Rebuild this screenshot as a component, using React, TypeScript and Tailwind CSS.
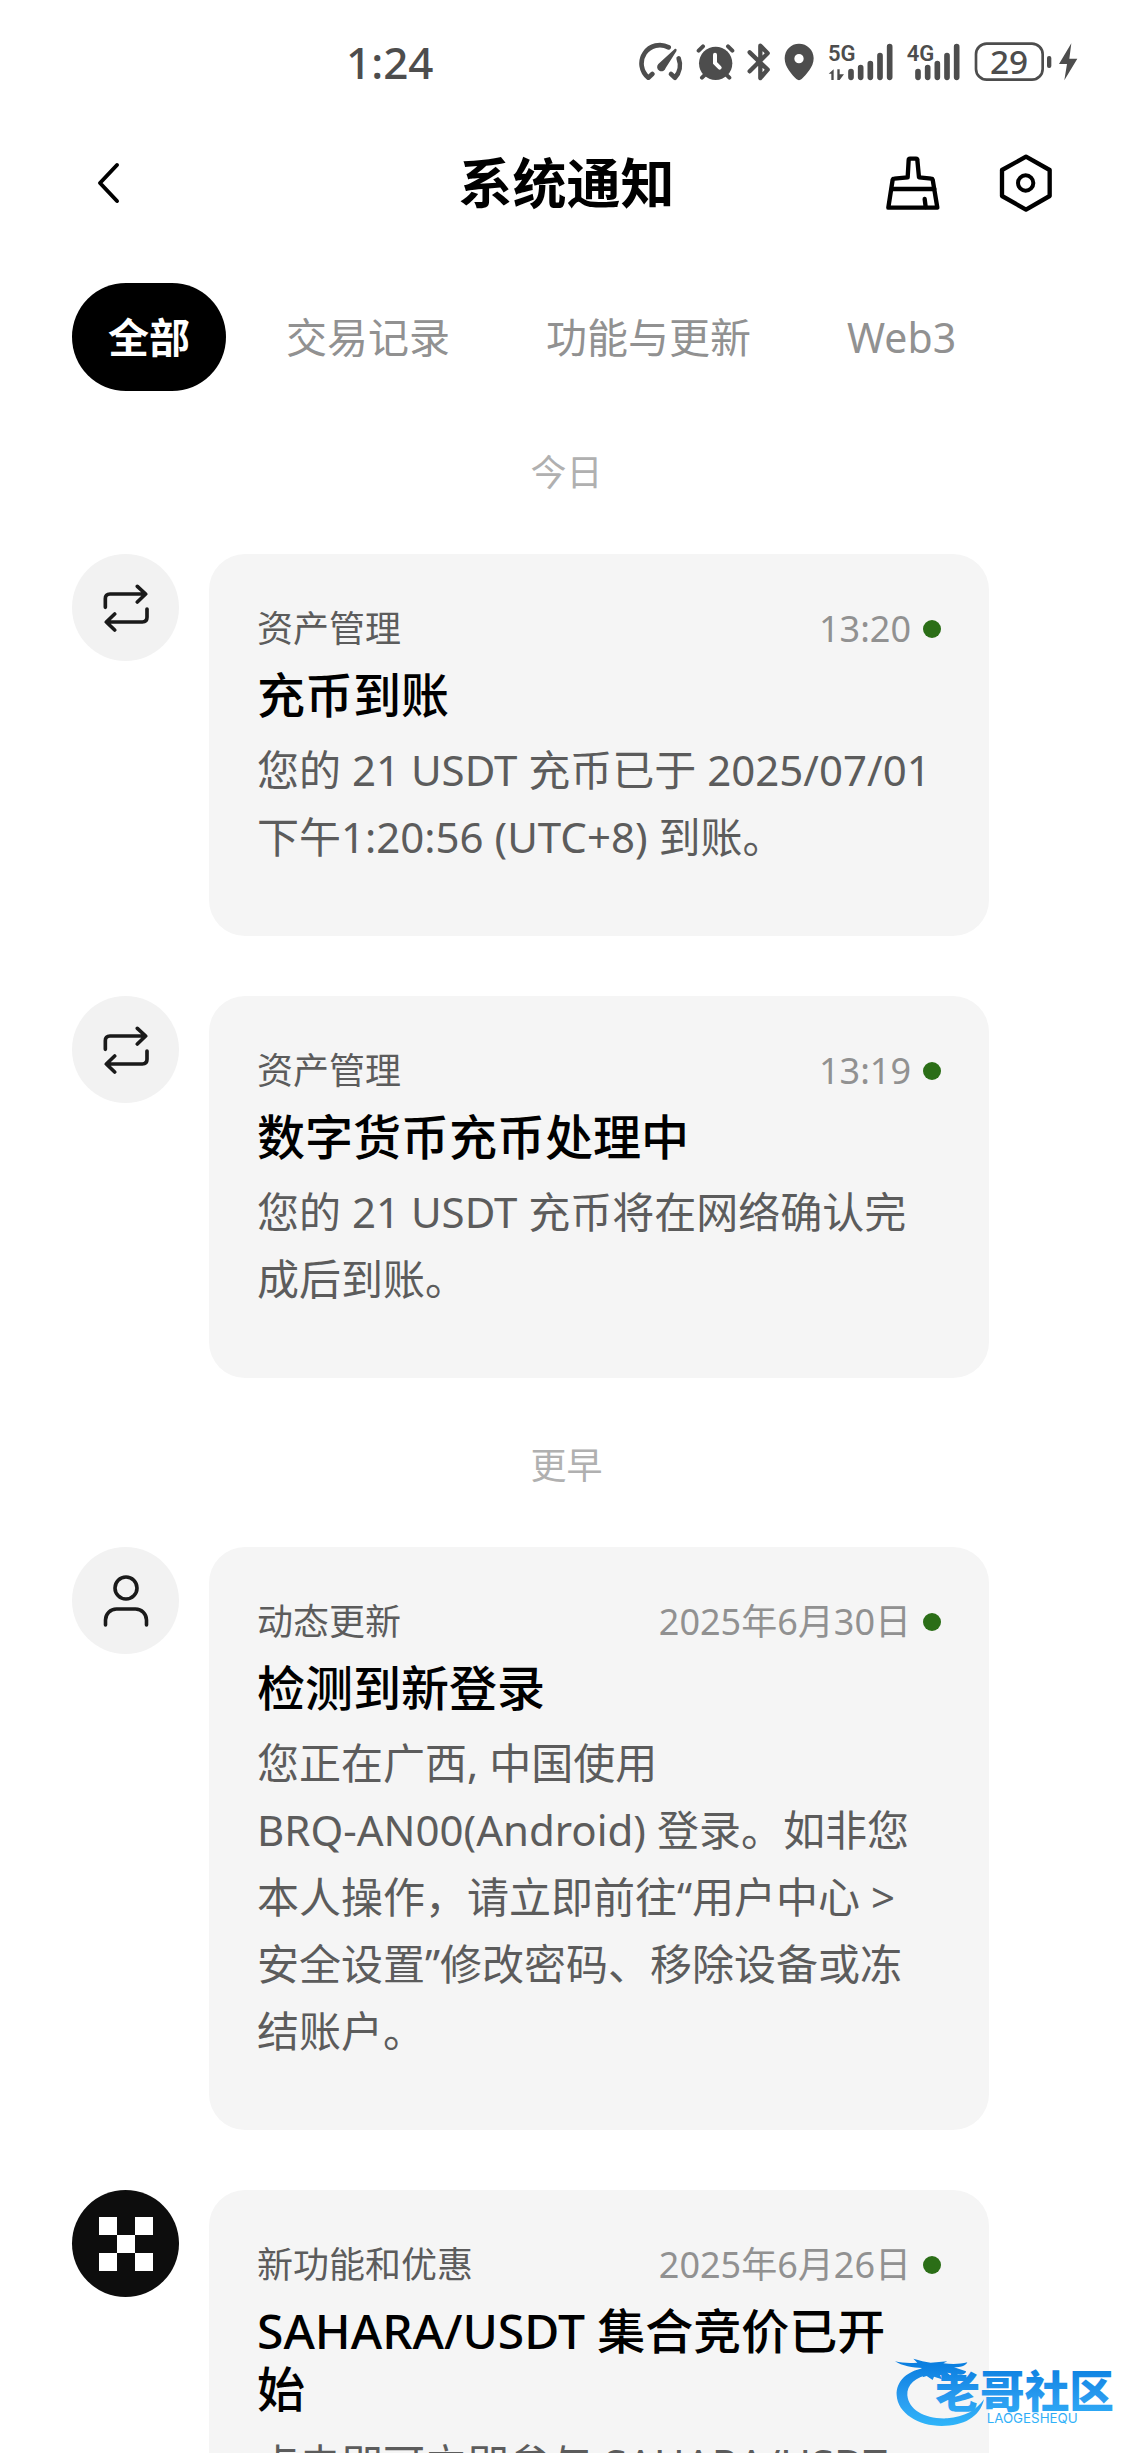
import type { ReactNode } from "react";
import { useState } from "react";

// ============================================================
// Status bar icons
// ============================================================
function GaugeIcon() {
  return (
    <svg width="45" height="40" viewBox="50 66 135 120" fill="none" stroke="currentColor" strokeWidth="14" strokeLinecap="round" strokeLinejoin="round">
      <path d="M90 162 78 173A55 55 0 0 1 139 82" />
      <path d="M146 162 158 173A56 56 0 0 0 169 115" />
      <path d="M158 86Q165 85 162 94L130 144A13 13 0 1 1 108 132Z" fill="currentColor" stroke="none" />
    </svg>
  );
}

function AlarmIcon() {
  return (
    <svg width="39" height="40" viewBox="222 66 117 120" fill="none" stroke="currentColor" strokeWidth="12" strokeLinecap="round">
      <circle cx="281" cy="130" r="50" fill="currentColor" stroke="none" />
      <path d="M230 92 243 79M331 92 318 79M240 173 250 163M322 173 312 163" />
      <path d="M279 104V129L293 143" stroke="#fff" />
    </svg>
  );
}

function BluetoothIcon() {
  return (
    <svg width="25" height="40" viewBox="380 66 75 120" fill="none" stroke="currentColor" strokeWidth="13" strokeLinecap="round" strokeLinejoin="round">
      <path d="M388 97 442 149 420 174V77L442 100 388 154" />
    </svg>
  );
}

function PinIcon() {
  return (
    <svg width="32" height="40" viewBox="492 66 96 120" fill="currentColor">
      <path fillRule="evenodd" d="M537 71C561 71 581 90 581 115C581 142 558 164 545 177Q537 184 529 177C516 164 494 142 494 115C494 90 513 71 537 71ZM537 102A14 14 0 1 0 537 130A14 14 0 1 0 537 102Z" />
    </svg>
  );
}

function SignalBars() {
  return (
    <path d="M204 155V172M233 143V172M262 131V172M291 107V172M320 80V172" fill="none" stroke="currentColor" strokeWidth="17" strokeLinecap="round" />
  );
}

function Signal5G() {
  return (
    <svg className="overflow-visible font-['Roboto',sans-serif]" width="66" height="40" viewBox="135 66 198 120" fill="currentColor">
      <text x="135" y="124" fontSize="66" fontWeight="600">5G</text>
      <SignalBars />
      <path d="M152 148V180H145V161H137ZM163 148V180H170L183 163H170V148Z" />
    </svg>
  );
}

function Signal4G() {
  return (
    <svg className="overflow-visible font-['Roboto',sans-serif]" width="55" height="40" viewBox="168 66 165 120" fill="currentColor">
      <text x="170" y="124" fontSize="66" fontWeight="600">4G</text>
      <SignalBars />
    </svg>
  );
}

function BatteryIcon() {
  return (
    <svg className="overflow-visible" width="106" height="40" viewBox="369 66 318 120" fill="currentColor">
      <rect x="378" y="71" width="200" height="108" rx="32" fill="none" stroke="currentColor" strokeWidth="8" />
      <text x="477" y="161" fontSize="100" fontWeight="500" textAnchor="middle">29</text>
      <rect x="591" y="108" width="13" height="36" rx="6" />
      <path d="M664 70 627 132H651L643 181 682 116H658Z" />
    </svg>
  );
}

// ============================================================
// Header icons
// ============================================================
function BackIcon() {
  return (
    <svg width="48" height="48" viewBox="0 0 48 48" fill="none" stroke="currentColor" strokeWidth="4" strokeLinecap="round" strokeLinejoin="round">
      <path d="M32 6 15 24 32 42" />
    </svg>
  );
}

function BroomIcon() {
  return (
    <svg width="60" height="60" viewBox="128 64 180 180" fill="none" stroke="currentColor" strokeWidth="13" strokeLinecap="round" strokeLinejoin="round">
      <path d="M144 228 157 144Q158 141 162 141L202 137 205 85Q205 81 209 81H227Q231 81 231 85L236 137 273 141Q276 141 277 144L291 228Z" />
      <path d="M155 172H282M253 202 256 226" />
    </svg>
  );
}

function SettingsIcon() {
  return (
    <svg width="60" height="60" viewBox="467 64 180 180" fill="none" stroke="currentColor" strokeWidth="13" strokeLinejoin="round">
      <path d="M557 75 628 115V193L557 234 485 193V115Z" />
      <circle cx="556" cy="154" r="23" strokeWidth="12" />
    </svg>
  );
}

// ============================================================
// Notification icons
// ============================================================
function TransferIcon() {
  return (
    <svg width="48" height="48" viewBox="125 130 144 144" fill="none" stroke="#1a1a1a" strokeWidth="11" strokeLinecap="round" strokeLinejoin="round">
      <path d="M135 200V174Q135 160 149 160H255M231 137 256 160 231 184" />
      <path d="M260 205V230Q260 244 246 244H138M163 220 138 244 163 268" />
    </svg>
  );
}

function UserIcon() {
  return (
    <svg width="54" height="54" viewBox="0 0 54 54" fill="none" stroke="#1a1a1a" strokeWidth="3.6" strokeLinecap="round">
      <circle cx="27" cy="14" r="11" />
      <path d="M6.5 51V46a11 11 0 0 1 11-11h19a11 11 0 0 1 11 11v5" />
    </svg>
  );
}

function BrandIcon() {
  return (
    <svg width="54" height="54" viewBox="0 0 54 54" fill="#fff">
      <path d="M0 0H18V18H0ZM36 0H54V18H36ZM18 18H36V36H18ZM0 36H18V54H0ZM36 36H54V54H36Z" />
    </svg>
  );
}

function CommunityLogo() {
  return (
    <svg className="pointer-events-none absolute right-[15px] bottom-[26px] overflow-visible" width="225" height="69" viewBox="99 84 675 207">
      <defs>
        <linearGradient id="logo-blue" x1="0" y1="84" x2="0" y2="291" gradientUnits="userSpaceOnUse">
          <stop offset="0.1" stopColor="#0b7fe0" />
          <stop offset="0.6" stopColor="#2a9cf0" />
          <stop offset="1" stopColor="#2fb6fa" />
        </linearGradient>
      </defs>
      <g fill="url(#logo-blue)">
        <path d="M205 112C140 120 108 155 110 196C113 250 175 288 245 288C310 288 360 262 372 208C350 240 312 262 262 265C195 268 146 240 142 196C140 165 165 140 215 133Z" />
        <path d="M105 94C125 99 150 100 172 98L160 86C180 91 195 96 212 98L262 94 250 100C275 103 300 103 322 97C318 108 300 112 282 112L318 124C318 134 300 137 286 132L262 128 276 140 240 135 246 148 222 140 218 150 200 138 188 142 194 128 172 128 186 114C160 113 125 108 105 94Z" />
        <text x="226" y="233" fontSize="134" fontWeight="900">老哥社区</text>
        <text x="380" y="278" fontSize="40" className="font-['Inter',sans-serif]">LAOGESHEQU</text>
      </g>
    </svg>
  );
}

// ============================================================
// Data
// ============================================================
type Notice = {
  id: number;
  icon: ReactNode;
  dark?: boolean;
  category: string;
  time: string;
  title: string;
  body: ReactNode;
};

const TABS = ["全部", "交易记录", "功能与更新", "Web3"];

const TODAY: Notice[] = [
  {
    id: 1,
    icon: <TransferIcon />,
    category: "资产管理",
    time: "13:20",
    title: "充币到账",
    body: "您的 21 USDT 充币已于 2025/07/01 下午1:20:56 (UTC+8) 到账。",
  },
  {
    id: 2,
    icon: <TransferIcon />,
    category: "资产管理",
    time: "13:19",
    title: "数字货币充币处理中",
    body: "您的 21 USDT 充币将在网络确认完成后到账。",
  },
];

const EARLIER: Notice[] = [
  {
    id: 3,
    icon: <UserIcon />,
    category: "动态更新",
    time: "2025年6月30日",
    title: "检测到新登录",
    body: (
      <>
        您正在广西, 中国使用 <span className="whitespace-nowrap">BRQ-AN00(Android)</span>{" "}
        登录。如非您本人操作，请立即前往“用户中心 &gt; 安全设置”修改密码、移除设备或冻结账户。
      </>
    ),
  },
  {
    id: 4,
    icon: <BrandIcon />,
    dark: true,
    category: "新功能和优惠",
    time: "2025年6月26日",
    title: "SAHARA/USDT 集合竞价已开始",
    body: "点击即可立即参与 SAHARA/USDT",
  },
];

// ============================================================
// NoticeSection — day label followed by its cards
// ============================================================
function NoticeSection({ label, items }: { label: string; items: Notice[] }) {
  return (
    <section>
      <h2 className="pt-[57px] pb-14 text-center text-4xl leading-[50px] text-[#b0b0b0]">{label}</h2>
      <ul className="flex flex-col gap-[60px] pr-36 pl-[72px]">
        {items.map((item) => (
          <NoticeCard key={item.id} item={item} />
        ))}
      </ul>
    </section>
  );
}

function NoticeCard({ item }: { item: Notice }) {
  return (
    <li className="flex items-start gap-[30px]">
      <div
        className={`flex size-[107px] shrink-0 items-center justify-center rounded-full ${
          item.dark ? "bg-[#0d0d0d]" : "bg-[#f2f2f2]"
        }`}
      >
        {item.icon}
      </div>
      <article className="min-w-0 flex-1 rounded-[36px] bg-[#f5f5f5] px-12 pt-[50px] pb-[66px]">
        <div className="flex items-center justify-between text-4xl leading-[50px]">
          <span className="text-[#5c5c5c]">{item.category}</span>
          <span className="flex items-center gap-3 text-[#919191]">
            {item.time}
            <i className="size-[18px] rounded-full bg-[#2b6e17]" />
          </span>
        </div>
        <h3 className="mt-3 pr-4 text-5xl leading-[58px] font-medium text-black">{item.title}</h3>
        <p className="mt-3 text-[42px] leading-[67px] text-[#5c5c5c]">{item.body}</p>
      </article>
    </li>
  );
}

export default function App() {
  const [active, setActive] = useState(TABS[0]);

  return (
    <div
      lang="zh-CN"
      className="relative flex h-screen flex-col overflow-hidden bg-white font-['Noto_Sans','Noto_Sans_CJK_SC',sans-serif]"
    >
      {/* Status bar */}
      <div className="flex h-[124px] shrink-0 items-center justify-between pr-[54px] pl-[346px] text-[#4d4d4d]">
        <span className="text-[44px] leading-[60px] font-medium">1:24</span>
        <div className="flex items-center gap-3">
          <GaugeIcon />
          <AlarmIcon />
          <BluetoothIcon />
          <PinIcon />
          <Signal5G />
          <Signal4G />
          <BatteryIcon />
        </div>
      </div>

      {/* Header */}
      <header className="grid h-[118px] shrink-0 grid-cols-[1fr_auto_1fr] items-center px-[77px]">
        <button type="button" aria-label="返回" className="justify-self-start pl-2">
          <BackIcon />
        </button>
        <h1 className="text-[54px] leading-[72px] font-bold text-black">系统通知</h1>
        <div className="flex gap-[53px] justify-self-end">
          <button type="button" aria-label="清除">
            <BroomIcon />
          </button>
          <button type="button" aria-label="设置">
            <SettingsIcon />
          </button>
        </div>
      </header>

      {/* Tabs */}
      <nav className="flex shrink-0 gap-6 px-[72px] pt-[41px]">
        {TABS.map((tab) => (
          <button
            key={tab}
            type="button"
            onClick={() => setActive(tab)}
            className={`h-[108px] rounded-full px-9 text-[41px] leading-[60px] ${
              tab === active ? "bg-black font-bold text-white" : "text-[#919191]"
            }`}
          >
            {tab}
          </button>
        ))}
      </nav>

      <main className="flex min-h-0 flex-1 flex-col gap-[6px] overflow-y-auto [scrollbar-width:none]">
        <NoticeSection label="今日" items={TODAY} />
        <NoticeSection label="更早" items={EARLIER} />
      </main>

      <CommunityLogo />
    </div>
  );
}
